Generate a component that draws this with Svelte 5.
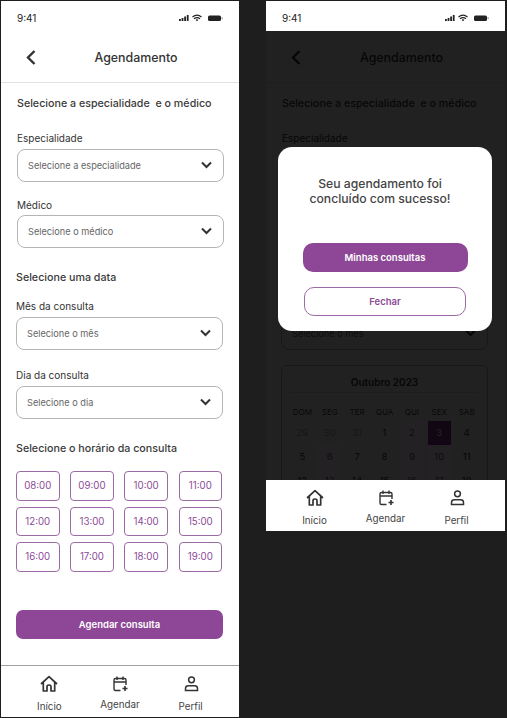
<script>
    const horarios = [
        "08:00", "09:00", "10:00", "11:00",
        "12:00", "13:00", "14:00", "15:00",
        "16:00", "17:00", "18:00", "19:00",
    ];
    const semana = ["DOM", "SEG", "TER", "QUA", "QUI", "SEX", "SAB"];
    const dias = [
        { n: 29, off: true }, { n: 30, off: true }, { n: 31, off: true }, { n: 1 },
        { n: 2, livre: true }, { n: 3, sel: true }, { n: 4 },
        { n: 5 }, { n: 6, livre: true }, { n: 7 }, { n: 8 },
        { n: 9, livre: true }, { n: 10, livre: true }, { n: 11 },
        { n: 12 }, { n: 13, livre: true }, { n: 14 }, { n: 15 },
        { n: 16, livre: true }, { n: 17, livre: true }, { n: 18 },
    ];
</script>

{#snippet statusBar()}
    <div class="status">
        <span>9:41</span>
        <svg width="44" height="8" viewBox="0 0 44 8">
            <rect x="0" y="5" width="1.8" height="2" fill="#222" />
            <rect x="2.6" y="4" width="1.8" height="3" fill="#222" />
            <rect x="5.2" y="2.5" width="1.8" height="4.5" fill="#222" />
            <rect x="7.8" y="1" width="1.8" height="6" fill="#222" />
            <path d="M13.5 3 Q18 -0.6 22.5 3 M15 4.7 Q18 2.4 21 4.7" fill="none" stroke="#222" stroke-width="1.2" />
            <path d="M16.7 6 L18 4.9 L19.3 6 L18 7.3 Z" fill="#222" />
            <rect x="29" y="1.5" width="13" height="5.5" rx="1.5" fill="#222" />
            <rect x="42.6" y="3.2" width="1" height="2" fill="#888" />
        </svg>
    </div>
{/snippet}

{#snippet header()}
    <header class="top">
        <svg class="back" width="12" height="17" viewBox="0 0 12 17">
            <path d="M9.5 2 L3 8.5 L9.5 15" fill="none" stroke="currentColor" stroke-width="2.4" />
        </svg>
        <h1>Agendamento</h1>
    </header>
{/snippet}

{#snippet campo(label, texto)}
    <div class="campo">
        <label>{label}</label>
        <div class="select">
            <span>{texto}</span>
            <svg width="11" height="8" viewBox="0 0 11 8">
                <path d="M1 1.5 L5.5 6 L10 1.5" fill="none" stroke="currentColor" stroke-width="2" />
            </svg>
        </div>
    </div>
{/snippet}

{#snippet primeiraParte()}
    <div class="bloco um">
        <h2>Selecione a especialidade&nbsp; e o médico</h2>
        {@render campo("Especialidade", "Selecione a especialidade")}
        {@render campo("Médico", "Selecione o médico")}
    </div>
    <div class="bloco dois">
        <h2>Selecione uma data</h2>
        {@render campo("Mês da consulta", "Selecione o mês")}
    </div>
{/snippet}

{#snippet nav()}
    <nav class="nav">
        <div class="item">
            <svg width="18" height="18" viewBox="0 0 18 18" fill="none" stroke="currentColor" stroke-width="1.7" stroke-linejoin="round">
                <path d="M1 9 L9 1.7 L17 9 M3.3 7.2 V16 H7 V11.6 Q7 10 9 10 Q11 10 11 11.6 V16 H14.7 V7.2" />
            </svg>
            <span>Início</span>
        </div>
        <div class="item meio">
            <svg width="18" height="18" viewBox="0 0 18 18" fill="none" stroke="currentColor" stroke-width="1.4">
                <path d="M9.5 15.5 H4.5 Q3 15.5 3 14 V5 Q3 3.5 4.5 3.5 H13.5 Q15 3.5 15 5 V10 M3 7 H15 M6 1.5 V5 M12 1.5 V5" />
                <path d="M14 11 V16 M11.5 13.5 H16.5" stroke-width="1.6" />
            </svg>
            <span>Agendar</span>
        </div>
        <div class="item">
            <svg width="18" height="18" viewBox="0 0 18 18" fill="none" stroke="currentColor" stroke-width="1.5">
                <circle cx="9.5" cy="4.8" r="2.9" />
                <path d="M3.5 15.5 V13.5 Q3.5 10.8 6.5 10.8 H12.5 Q15.5 10.8 15.5 13.5 V15.5 Z" />
            </svg>
            <span>Perfil</span>
        </div>
    </nav>
{/snippet}

<div class="tela">
    <section class="phone esquerda">
        {@render statusBar()}
        {@render header()}
        <main class="corpo">
            {@render primeiraParte()}
            <div class="bloco tres">
                {@render campo("Dia da consulta", "Selecione o dia")}
                <h2 class="horario">Selecione o horário da consulta</h2>
                <div class="horas">
                    {#each horarios as h}
                        <div class="hora">{h}</div>
                    {/each}
                </div>
                <button class="primario agendar">Agendar consulta</button>
            </div>
        </main>
        {@render nav()}
    </section>

    <section class="phone direita">
        {@render statusBar()}
        <div class="fundo">
            {@render header()}
            <main class="corpo">
                {@render primeiraParte()}
                <div class="calendario">
                    <div class="mes">Outubro 2023</div>
                    <div class="grade">
                        {#each semana as s}
                            <div class="sem">{s}</div>
                        {/each}
                        {#each dias as d}
                            <div class="dia" class:off={d.off} class:livre={d.livre} class:sel={d.sel}>{d.n}</div>
                        {/each}
                    </div>
                </div>
            </main>
            <div class="escuro"></div>
            <div class="modal">
                <p>Seu agendamento foi<br />concluído com sucesso!</p>
                <button class="primario minhas">Minhas consultas</button>
                <button class="fechar">Fechar</button>
            </div>
        </div>
        {@render nav()}
    </section>
</div>

<style>
    :global(body) {
        margin: 0;
        background: #1e1e1e;
    }
    .tela {
        display: flex;
        align-items: flex-start;
        gap: 27px;
        width: 507px;
        height: 718px;
        padding: 1px 2px 0 1px;
        box-sizing: border-box;
        overflow: hidden;
        font-family: Inter, "Liberation Sans", sans-serif;
        color: #333;
    }
    .phone {
        display: flex;
        flex-direction: column;
        flex: none;
        background: #fff;
        overflow: hidden;
    }
    .esquerda {
        width: 238px;
        height: 716px;
    }
    .direita {
        width: 239px;
        height: 530px;
    }
    .status {
        display: flex;
        flex: none;
        justify-content: space-between;
        align-items: center;
        height: 30px;
        padding: 4px 16px 0 16px;
        box-sizing: border-box;
        font-size: 10px;
        color: #222;
    }
    .top {
        position: relative;
        display: flex;
        align-items: center;
        justify-content: center;
        height: 51px;
        padding: 1px 0 0 32px;
        box-sizing: content-box;
        height: 50px;
        border-bottom: 1px solid #e3e3e3;
        color: #333;
    }
    .back {
        position: absolute;
        left: 24px;
        top: 18px;
    }
    h1 {
        margin: 0;
        font-size: 12.4px;
        font-weight: 500;
    }
    h2 {
        margin: 0;
        font-size: 10.7px;
        line-height: 14px;
        font-weight: 500;
        color: #3a3a3a;
        white-space: nowrap;
    }
    .corpo {
        flex: 1;
        min-height: 0;
    }
    .bloco {
        padding: 0 16px 0 15px;
    }
    .um {
        padding: 14px 15px 0 16px;
    }
    .dois {
        padding-top: 23.5px;
    }
    .direita .dois {
        padding-right: 17px;
    }
    .um .campo {
        margin-top: 20px;
    }
    .um .campo + .campo {
        margin-top: 16.5px;
    }
    .um h2 + .campo label,
    .dois label,
    .tres label {
        margin-bottom: 4px;
    }
    .dois .campo {
        margin-top: 14px;
    }
    .tres {
        padding-top: 18.5px;
    }
    label {
        display: block;
        height: 14px;
        margin-bottom: 3px;
        font-size: 10px;
        line-height: 14px;
        color: #333;
    }
    .select {
        display: flex;
        align-items: center;
        justify-content: space-between;
        height: 32.5px;
        padding: 0 11px 0 10px;
        box-sizing: border-box;
        border: 1px solid #b5b5b5;
        border-radius: 8px;
        font-size: 9.2px;
        color: #666;
    }
    .select svg {
        color: #333;
    }
    .horario {
        margin-top: 23px;
    }
    .horas {
        display: grid;
        grid-template-columns: repeat(4, 43.5px);
        column-gap: 10.7px;
        row-gap: 6px;
        margin-top: 15.5px;
    }
    .hora {
        display: flex;
        align-items: center;
        justify-content: center;
        height: 29.5px;
        box-sizing: border-box;
        border: 1px solid #9c6aa5;
        border-radius: 4px;
        font-size: 9.7px;
        color: #8b4a96;
    }
    button {
        display: block;
        font-family: inherit;
        font-size: 9.5px;
        font-weight: 600;
        padding: 0;
    }
    .primario {
        border: none;
        background: #8e4796;
        color: #fff;
    }
    .agendar {
        width: 207px;
        height: 29px;
        margin-top: 38px;
        border-radius: 7px;
    }
    .nav {
        display: flex;
        flex: none;
        justify-content: space-around;
        height: 52px;
        box-sizing: border-box;
        padding: 9px 13px 0;
        border-top: 1px solid #a0a0a0;
        background: #fff;
        color: #333;
        position: relative;
    }
    .item {
        display: flex;
        flex-direction: column;
        align-items: center;
        width: 50px;
        gap: 8px;
        font-size: 9.8px;
        color: #444;
    }
    .item svg {
        color: #333;
    }
    .meio {
        gap: 5.5px;
    }
    .direita .nav {
        height: 51px;
        border-top: none;
        padding-top: 9px;
    }

    /* segunda tela: fundo escuro com o modal por cima */
    .fundo {
        position: relative;
        flex: 1;
        min-height: 0;
        overflow: hidden;
    }
    .escuro {
        position: absolute;
        inset: 0;
        background: rgba(0, 0, 0, 0.87);
    }
    .modal {
        position: absolute;
        z-index: 2;
        left: 12px;
        top: 116px;
        width: 214px;
        height: 184px;
        box-sizing: border-box;
        padding-top: 29px;
        background: #fff;
        border-radius: 14px;
    }
    .modal p {
        margin: 0;
        padding-right: 10px;
        font-size: 12.2px;
        line-height: 15px;
        font-weight: 500;
        text-align: center;
        color: #444;
    }
    .minhas {
        width: 165px;
        height: 29px;
        margin: 37px auto 0;
        border-radius: 10px;
    }
    .fechar {
        width: 162px;
        height: 28.5px;
        margin: 15px auto 0;
        border: 1px solid #9c6aa5;
        border-radius: 10px;
        background: #fff;
        color: #8b4a96;
    }
    .calendario {
        margin: 15.5px 17px 0 15px;
        height: 160px;
        border: 1px solid #b5b5b5;
        border-radius: 6px;
        padding: 0 9px;
    }
    .mes {
        height: 26px;
        line-height: 32px;
        border-bottom: 1px solid #ddd;
        font-size: 10px;
        font-weight: 600;
        text-align: center;
    }
    .grade {
        display: grid;
        grid-template-columns: repeat(7, 27.4px);
        grid-template-rows: 18px;
        grid-auto-rows: 24px;
        justify-content: center;
        justify-items: center;
        margin-top: 10px;
    }
    .sem {
        font-size: 8px;
        line-height: 18px;
        color: #444;
    }
    .dia {
        width: 23px;
        text-align: center;
        font-size: 9.5px;
        line-height: 24px;
        color: #333;
    }
    .off {
        color: #aaa;
    }
    /* acima do escuro: o tom roxo dessas células fica mais claro que o fundo */
    .livre {
        position: relative;
        z-index: 1;
        background: #242125;
        color: #0c0c0c;
    }
    .sel {
        background: #8e2a9e;
        color: #fff;
    }
</style>
